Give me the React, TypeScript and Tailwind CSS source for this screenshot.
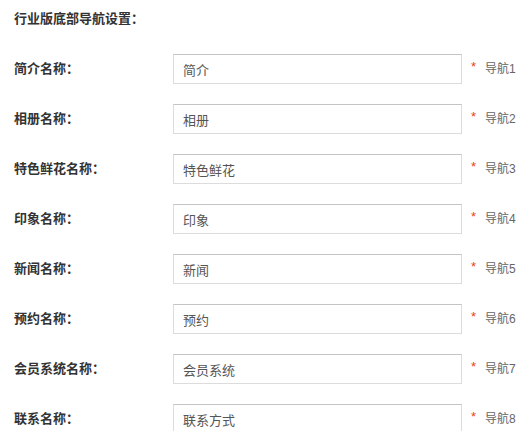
const rows = [
  { label: "简介名称：", value: "简介" },
  { label: "相册名称：", value: "相册" },
  { label: "特色鲜花名称：", value: "特色鲜花" },
  { label: "印象名称：", value: "印象" },
  { label: "新闻名称：", value: "新闻" },
  { label: "预约名称：", value: "预约" },
  { label: "会员系统名称：", value: "会员系统" },
  { label: "联系名称：", value: "联系方式" },
];

export default function App() {
  return (
    <div className="w-[528px] h-[431px] overflow-hidden bg-white px-[14px] pt-[10px] font-['Liberation_Sans','Noto_Sans_CJK_SC',sans-serif] text-[13px] text-[#333]">
      <h2 className="h-[18px] leading-[18px] font-bold">行业版底部导航设置：</h2>
      <div className="mt-[26px] flex flex-col gap-[20px]">
        {rows.map((r, i) => (
          <div key={r.label} className="flex h-[30px] items-center whitespace-nowrap">
            <span className="w-[159px] shrink-0 font-bold">{r.label}</span>
            <input
              readOnly
              value={r.value}
              className="h-[30px] w-[289px] shrink-0 border border-[#dcdcdc] border-t-[#c4c4c4] px-[9px] text-[13px] text-[#555] outline-none"
            />
            <span className="mb-[6px] ml-[9px] w-[14px] shrink-0 text-[13px] leading-none text-[#f03c0f]">*</span>
            <span className="shrink-0 text-[12px] text-[#666]">导航{i + 1}</span>
          </div>
        ))}
      </div>
    </div>
  );
}
